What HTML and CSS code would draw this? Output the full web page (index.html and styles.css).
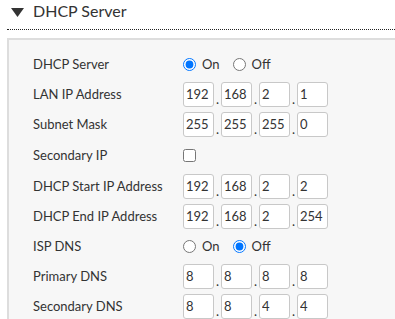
FILE: index.html
```html
<!DOCTYPE html>
<html lang="en">
<head>
  <meta charset="UTF-8">
  <title>DHCP Server</title>
  <link rel="stylesheet" href="styles.css">
</head>
<body>

  <!-- Section header -->
  <div class="section-title">
    <svg class="arrow" width="13" height="9" viewBox="0 0 13 9"><polygon points="0,0 13,0 6.5,9" fill="#333"/></svg>
    <span>DHCP Server</span>
  </div>

  <div class="panel">
    <div class="row">
      <label class="row-label">DHCP Server</label>
      <div class="radios">
        <label class="radio"><input type="radio" name="dhcp" checked> On</label>
        <label class="radio"><input type="radio" name="dhcp"> Off</label>
      </div>
    </div>

    <div class="row">
      <label class="row-label">LAN IP Address</label>
      <div class="ip">
        <input type="text" value="192"><span class="dot">.</span><input type="text" value="168"><span class="dot">.</span><input type="text" value="2"><span class="dot">.</span><input type="text" value="1">
      </div>
    </div>

    <div class="row">
      <label class="row-label">Subnet Mask</label>
      <div class="ip">
        <input type="text" value="255"><span class="dot">.</span><input type="text" value="255"><span class="dot">.</span><input type="text" value="255"><span class="dot">.</span><input type="text" value="0">
      </div>
    </div>

    <div class="row row-tall">
      <label class="row-label">Secondary IP</label>
      <input type="checkbox" class="check">
    </div>

    <div class="row">
      <label class="row-label">DHCP Start IP Address</label>
      <div class="ip">
        <input type="text" value="192"><span class="dot">.</span><input type="text" value="168"><span class="dot">.</span><input type="text" value="2"><span class="dot">.</span><input type="text" value="2">
      </div>
    </div>

    <div class="row">
      <label class="row-label">DHCP End IP Address</label>
      <div class="ip">
        <input type="text" value="192"><span class="dot">.</span><input type="text" value="168"><span class="dot">.</span><input type="text" value="2"><span class="dot">.</span><input type="text" value="254">
      </div>
    </div>

    <div class="row">
      <label class="row-label">ISP DNS</label>
      <div class="radios">
        <label class="radio"><input type="radio" name="isp"> On</label>
        <label class="radio"><input type="radio" name="isp" checked> Off</label>
      </div>
    </div>

    <div class="row">
      <label class="row-label">Primary DNS</label>
      <div class="ip">
        <input type="text" value="8"><span class="dot">.</span><input type="text" value="8"><span class="dot">.</span><input type="text" value="8"><span class="dot">.</span><input type="text" value="8">
      </div>
    </div>

    <div class="row">
      <label class="row-label">Secondary DNS</label>
      <div class="ip">
        <input type="text" value="8"><span class="dot">.</span><input type="text" value="8"><span class="dot">.</span><input type="text" value="4"><span class="dot">.</span><input type="text" value="4">
      </div>
    </div>
  </div>

</body>
</html>
```

FILE: styles.css
```css
* {
  box-sizing: border-box;
}

body {
  margin: 0;
  font-family: Lato, 'Noto Sans', sans-serif;
  color: #333;
  background: #fff;
  overflow: hidden;
}

.section-title {
  display: flex;
  align-items: center;
  height: 30px;
  margin-left: 7px;
  padding: 0 0 9px 4px;
  border-bottom: 1px dotted #222;
  font-size: 16px;
}

.arrow {
  margin: 4px 9px 0 0;
}

.panel {
  margin: 8px -30px 0 7px;
  background: #f7f7f7;
  border: 2px solid #ddd;
  padding: 9px 0 0 24px;
}

.row {
  display: flex;
  align-items: center;
  height: 30px;
  font-size: 13px;
}

.row-tall {
  height: 32px;
}

.row-label {
  width: 150px;
}

.radios {
  display: flex;
  align-items: center;
}

.radio {
  display: flex;
  align-items: center;
  margin-right: 13px;
}

.radio input {
  width: 13px;
  height: 13px;
  margin: 0 6px 0 0;
}

.check {
  width: 13px;
  height: 13px;
  margin: 0;
}

.ip {
  display: flex;
  align-items: flex-end;
}

.ip input {
  width: 31px;
  height: 25px;
  margin: 0;
  padding: 0 2px;
  border: 1px solid #c8c8c8;
  border-radius: 3px;
  background: #fff;
  font-family: inherit;
  font-size: 13px;
  color: #333;
}

.dot {
  width: 7px;
  text-align: center;
  font-size: 13px;
  line-height: 16px;
}
```
